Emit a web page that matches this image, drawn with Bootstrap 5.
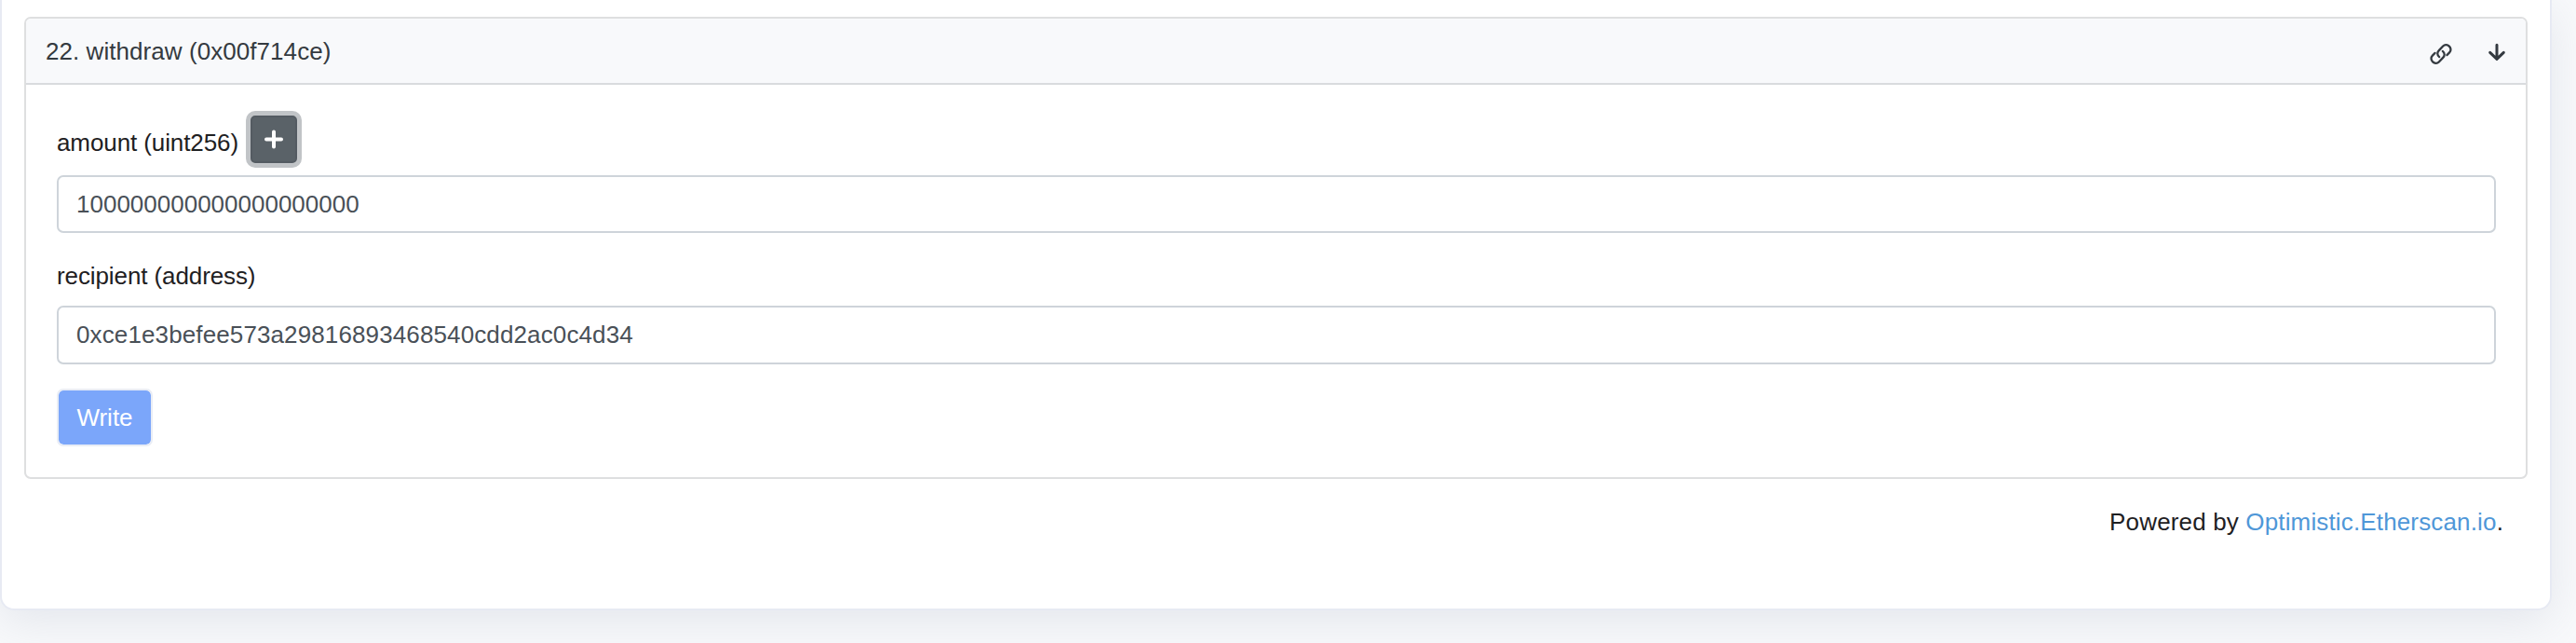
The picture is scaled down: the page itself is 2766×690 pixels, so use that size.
<!DOCTYPE html>
<html lang="en">
<head>
<meta charset="utf-8">
<title>Write Contract</title>
<link href="https://cdn.jsdelivr.net/npm/bootstrap@5.3.0/dist/css/bootstrap.min.css" rel="stylesheet">
<style>
  body { font: 26px/39px "Liberation Sans", Arial, sans-serif; color: #1e2022; background: #f8f9fb; height: 690px; overflow: hidden; }
  .panel { width: 2740px; height: 655px; border: 2px solid #e7eaf3; border-top: 0; border-radius: 0 0 15px 15px; box-shadow: 0 12px 48px rgba(140,152,174,.18); padding: 18px 24px 0; }
  .fn-card { height: 496px; border: 2px solid #dedfe0; border-radius: 7px; }
  .fn-head { height: 71px; background: #f8f9fb; border-bottom: 2px solid #d9dbde; border-radius: 5px 5px 0 0; padding: 2px 21px 0 21px; color: #343a40; letter-spacing: .06px; }
  .fn-body { padding: 28px 32px 0 33px; }
  .fn-label { height: 69px; padding-top: 15px; letter-spacing: -.1px; }
  .fn-label.second { height: 51px; padding: 0; margin-top: 27px; letter-spacing: -.1px; }
  .fn-input.form-control { height: 62px; font-size: 26px; line-height: 39px; border: 2px solid #ced4da; border-radius: 7px; padding: 0 19px; color: #495057; }
  #recipient { height: 63px; letter-spacing: .12px; }
  .add-btn { width: 50px; height: 51px; margin: 5px 0 0 13px; background: #5a6268; border: 2px solid #545b62; border-radius: 5px; box-shadow: 0 0 0 5px #c1c4c7; }
  .write-btn.btn { width: 103px; height: 62px; margin-top: 26px; padding: 0; font-size: 26px; line-height: 39px; color: #fff; background: #7ba6fa; background-clip: padding-box; border: 2px solid #e9edf5; border-radius: 7px; }
  .powered { padding: 27px 26px 0 0; letter-spacing: .15px; }
  .powered a { color: #4f97d8; }
  .link-icon { margin-top: 5px; }
  .arrow-icon { margin-left: 38px; }
</style>
</head>
<body>
<main class="panel bg-white">
  <section class="fn-card bg-white">
    <header class="fn-head d-flex justify-content-between align-items-center">
      <span>22. withdraw (0x00f714ce)</span>
      <span class="d-flex align-items-center">
        <svg class="link-icon" width="24" height="24" viewBox="0 0 24 24" fill="none" stroke="#343a40" stroke-width="2.3" stroke-linecap="round"><path d="M10.2 15.1C7.7 13.2 7.8 10.2 9.6 8.4L14.2 3.5C18.3-.8 25.5 6 21.1 10.4L18.4 13.1M13.8 8.9C16.3 10.8 16.2 13.8 14.4 15.6L9.8 20.5C5.7 24.8-1.5 18 2.9 13.6L5.6 10.9"/></svg>
        <svg class="arrow-icon" width="20" height="20" viewBox="0 0 20 20" fill="none" stroke="#343a40" stroke-width="3" stroke-linecap="round" stroke-linejoin="round"><path d="M10 2.3V17M2.7 10.3 10 17.3 17.3 10.3"/></svg>
      </span>
    </header>
    <div class="fn-body">
      <div class="d-flex align-items-start mb-0">
        <label class="fn-label" for="amount">amount (uint256)</label>
        <button class="add-btn d-flex align-items-center justify-content-center p-0" type="button" aria-label="Add zeroes"><svg width="22" height="22" viewBox="0 0 22 22" stroke="#fff" stroke-width="4" stroke-linecap="round"><path d="M11 2.5V18.5M3 10.5H19"/></svg></button>
      </div>
      <input class="form-control fn-input" id="amount" value="100000000000000000000">
      <label class="fn-label second d-block" for="recipient">recipient (address)</label>
      <input class="form-control fn-input" id="recipient" value="0xce1e3befee573a29816893468540cdd2ac0c4d34">
      <button class="btn write-btn d-block" type="button">Write</button>
    </div>
  </section>
  <footer class="powered text-end">Powered by <a class="text-decoration-none" href="#">Optimistic.Etherscan.io</a>.</footer>
</main>
<script src="https://cdn.jsdelivr.net/npm/bootstrap@5.3.0/dist/js/bootstrap.bundle.min.js"></script>
</body>
</html>
